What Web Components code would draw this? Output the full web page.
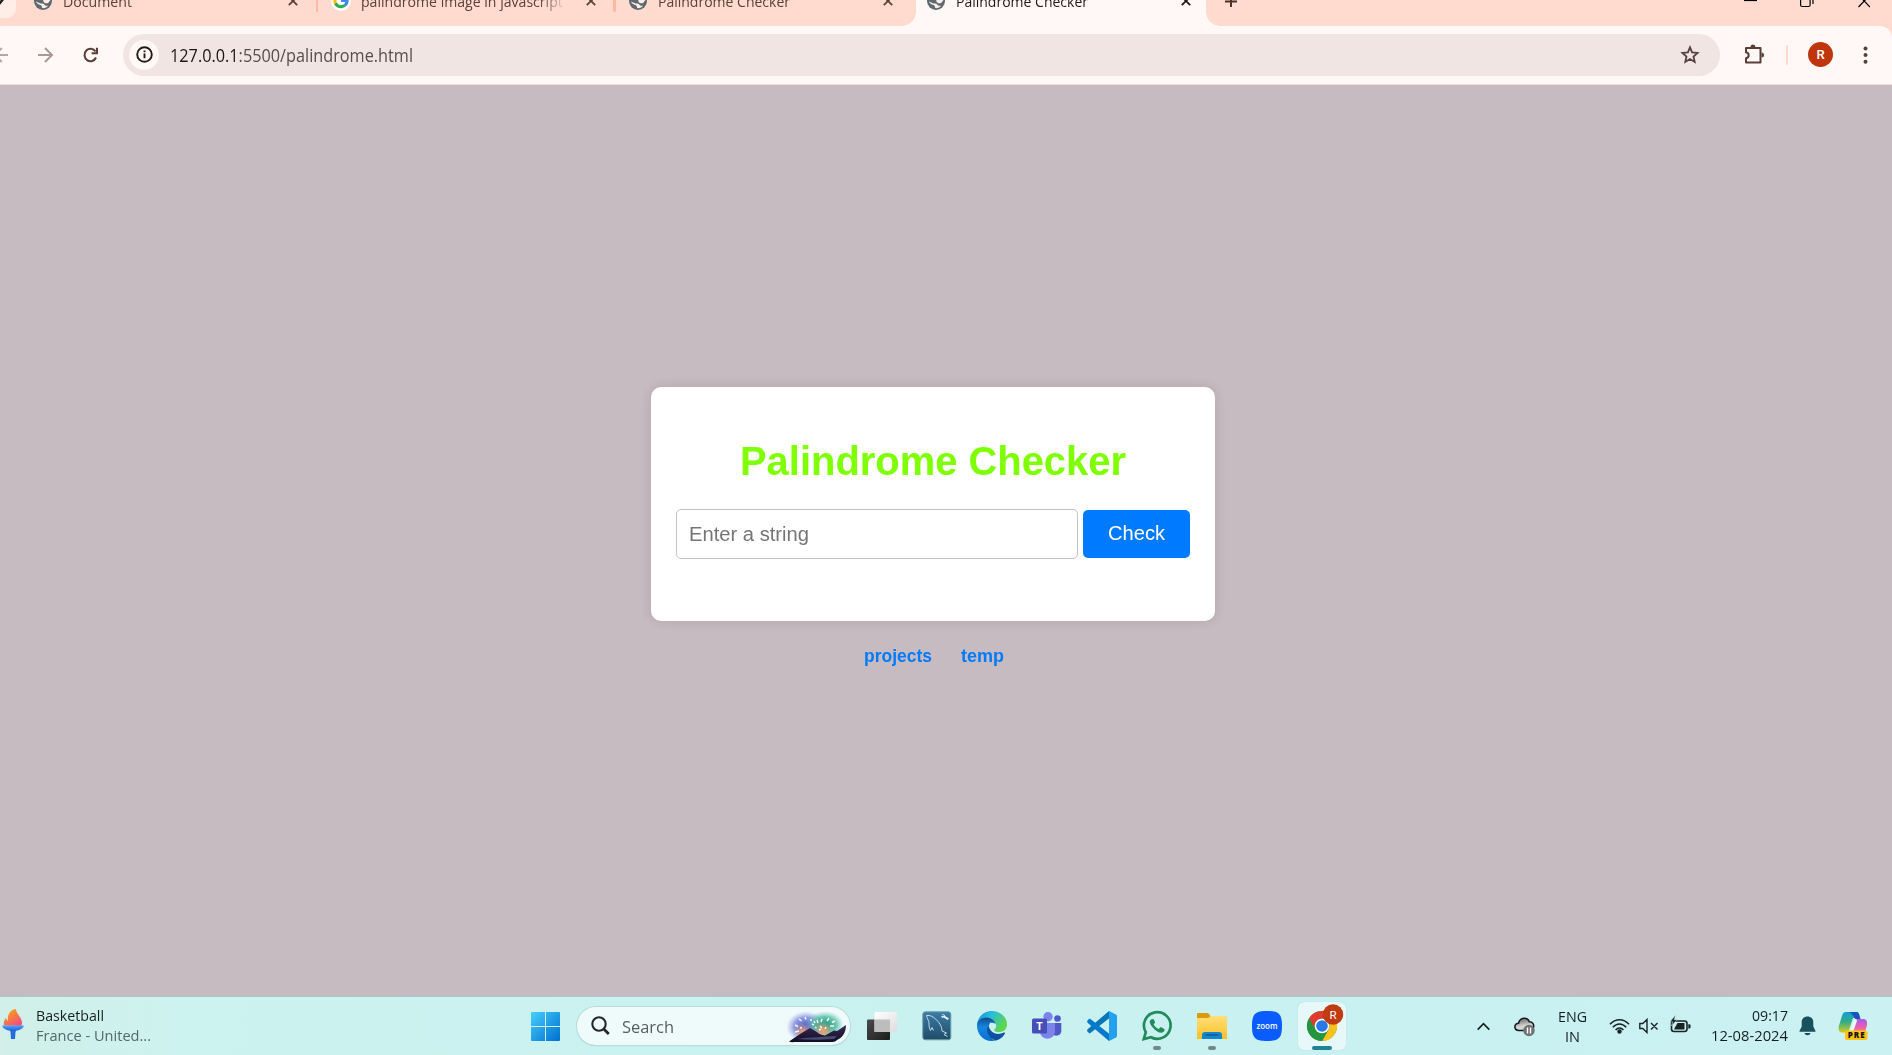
<!DOCTYPE html>
<html lang="en">
<head>
<meta charset="utf-8">
<title>Palindrome Checker</title>
<style>
html,body{margin:0;height:100%;overflow:hidden}
body{font-family:"Open Sans","Noto Sans",sans-serif;display:flex;flex-direction:column;background:#c6bbc0;color:#231a18}
</style>
</head>
<body>
<tab-strip></tab-strip>
<nav-bar></nav-bar>
<page-view></page-view>
<task-bar></task-bar>
<script>
function define(name, html) {
  const t = document.createElement('template');
  t.innerHTML = html;
  customElements.define(name, class extends HTMLElement {
    connectedCallback() {
      if (this.shadowRoot) return;
      this.attachShadow({mode: 'open'}).appendChild(document.importNode(t.content, true));
    }
  });
}

/* A single line of text stretched to an exact width. */
customElements.define('fit-text', class extends HTMLElement {
  connectedCallback() {
    if (this.shadowRoot) return;
    const w = +this.getAttribute('w');
    this.attachShadow({mode: 'open'}).innerHTML =
      `<style>:host{display:block;flex:none;width:${w}px;white-space:nowrap}span{display:inline-block;transform-origin:0 50%}</style><span><slot></slot></span>`;
    const s = this.shadowRoot.querySelector('span');
    const n = s.getBoundingClientRect().width;
    if (n) s.style.transform = `scaleX(${w / n})`;
  }
});

define('globe-icon', `<style>:host{display:block;flex:none;width:18px;height:18px}svg{display:block}</style>
<svg width="18" height="18" viewBox="0 0 18 18"><circle cx="9" cy="9" r="9" fill="#5f6a70"/><path d="M11 2c2.500.6 5 3 5.300 6.500-.6.300-1 .6-1.300 1.500-.5 1.300-3 1.700-4.500.7-1.200-.8-1.500-2-1-3.200z" fill="#ffeee8"/><path d="M2 9.600l4.500 1.900c2.200-.2 4 .4 4.600 2 1.200.7 2.800.3 3.300-.6-.8 1.900-3.300 3.600-6.200 3.200-.1-1.500-.5-2.600-1.700-3.200C4.500 12.500 2.500 11.500 2 9.600z" fill="#ffeee8"/></svg>`);

define('close-icon', `<style>:host{display:block;flex:none;width:10px;height:10px}svg{display:block}</style>
<svg width="10" height="10"><path d="M.8.8l8.400 8.400M9.200.8L.8 9.200" stroke="currentColor" stroke-width="1.800"/></svg>`);

define('browser-tab', `<style>
:host{display:flex;flex:none;align-items:center;width:297.500px;height:50px;box-sizing:border-box;padding-left:11px;font-size:15px;color:#5a413a}
.label{width:210px;margin-left:11px;overflow:hidden;line-height:20px}
:host([fade]) .label{-webkit-mask:linear-gradient(90deg,#000 178px,transparent 206px)}
close-icon{margin-left:15px}
:host([active]){color:#231a18}
</style><slot name="icon"></slot><div class="label"><slot></slot></div><close-icon></close-icon>`);

define('tab-strip', `<style>
:host{display:block;flex:none;height:26px;overflow:hidden;background:#ffdbcf}
.row{display:flex;height:50px;margin-top:-24px;position:relative}
.prev{width:16px;height:42px;background:#ffede8;border-radius:0 0 9px 0;margin-right:7px;overflow:hidden}
.prev svg{display:block;margin-top:19px}
browser-tab{position:relative}
.sep::after{content:"";position:absolute;right:2.500px;bottom:14px;width:2.500px;height:18px;border-radius:2px;background:#ffb8a2}
.active{background:#fff8f6;width:290px}
.active::before,.active::after{content:"";position:absolute;bottom:0;width:14px;height:14px}
.active::before{right:100%;background:radial-gradient(circle at 0 0,transparent 13.500px,#fff8f6 14px)}
.active::after{left:100%;background:radial-gradient(circle at 100% 0,transparent 13.500px,#fff8f6 14px)}
.g{display:block;flex:none;width:18px;height:18px}
.plus{margin:19px 0 0 19px;display:block}
.win{display:flex;margin-left:auto;padding:14px 22px 0 0}
.win svg{display:block}
</style><div class="row">
<div class="prev"><svg width="12" height="16"><path d="M-4 4L0 8l4-5" stroke="#231a18" stroke-width="2.500" fill="none"/></svg></div>
<browser-tab class="sep"><globe-icon slot="icon"></globe-icon><fit-text w="69">Document</fit-text></browser-tab>
<browser-tab class="sep" fade><svg slot="icon" class="g" viewBox="0 0 18 18" style="overflow:visible"><circle cx="9" cy="9" r="10" fill="#fff"/><path d="M9 7.400h7.500c.5 3.200-.7 5.500-2.400 6.900l-2.500-2c.9-.6 1.500-1.300 1.700-2.200H9z" fill="#4285f4"/><path d="M14.100 14.300C11.400 16.800 4.800 17.300 2.100 12.300l2.700-2c1.300 3.300 4.700 3.400 6.800 2z" fill="#34a853"/><path d="M2.100 12.300c-1-1.800-1.100-4.500 0-6.600l2.700 2c-.4.900-.4 1.800 0 2.600z" fill="#fbbc05"/><path d="M2.100 5.700C4.500 1 10.400.2 14 3.500l-2.300 2.300c-2.200-2-5.800-1.200-6.900 1.900z" fill="#ea4335"/></svg><fit-text w="210">palindrome image in javascript -</fit-text></browser-tab>
<browser-tab><globe-icon slot="icon"></globe-icon><fit-text w="132">Palindrome Checker</fit-text></browser-tab>
<browser-tab class="active" active><globe-icon slot="icon"></globe-icon><fit-text w="132">Palindrome Checker</fit-text></browser-tab>
<svg class="plus" width="12" height="12"><path d="M6 0v12M0 6.500h12" stroke="#4e3029" stroke-width="2"/></svg>
<div class="win"><svg width="126" height="18" fill="none" stroke="#000" stroke-width="1.200"><path d="M0 10.500h13"/><rect x="56.600" y="6.500" width="9.500" height="10" rx="1.500"/><path d="M58.500 3h8.500a2 2 0 0 1 2 2v9"/><path d="M114.500 5l11.500 12M126 5l-11.500 12"/></svg></div>
</div>`);

define('nav-bar', `<style>
:host{display:block;flex:none;height:59px;background:#ffdbcf;color:#5a3f38}
.bar{display:flex;align-items:center;box-sizing:border-box;height:58px;background:#fff8f6;border-radius:0 12px 0 0;padding-bottom:1px}
svg{display:block;flex:none}
.omni{display:flex;align-items:center;box-sizing:border-box;width:1597px;height:42px;border-radius:21px;background:#f1e5e4;margin:0 24px 0 25px;padding:0 20px 0 6px}
.info{width:30px;height:30px;border-radius:50%;background:#fff8f6;display:grid;place-items:center;margin-right:11px}
.url{font-size:18px;line-height:24px;color:#574d4d}
.url b{font-weight:400;color:#1c1615}
.star{margin-left:auto}
.sep{width:2px;height:20px;border-radius:1px;background:#ffdbcf;margin:0 20px 0 22px}
.av{width:25px;height:25px;border-radius:50%;background:#bf360c;color:#fff;font:500 13px/25px Roboto,sans-serif;text-align:center;margin-right:30px}
</style><div class="bar">
<svg width="38" height="18" fill="none" stroke="#b6a5a1" stroke-width="2"><path d="M-5 9H8M1.800 2l-7 7 7 7"/></svg>
<svg width="16" height="18" fill="none" stroke="#a99894" stroke-width="2"><path d="M0 9h14M7 2l7 7-7 7"/></svg>
<svg style="margin-left:29px" width="15" height="16" fill="none" stroke="#5a3f38" stroke-width="2.100"><path d="M13 10.500A6 6.200 0 1 1 12.500 4.500"/><path d="M14 .8v5.400H8.600"/></svg>
<div class="omni"><div class="info"><svg width="17" height="17" fill="none" stroke="#231a18" stroke-width="1.900"><circle cx="8.500" cy="8.500" r="7.300"/><path d="M8.500 7.600v4.700M8.500 4.400v1.900"/></svg></div>
<fit-text class="url" w="243"><b>127.0.0.1</b>:5500/palindrome.html</fit-text>
<svg class="star" width="20" height="20" viewBox="0 0 20 20" fill="none" stroke="#54413d" stroke-width="1.800"><path d="M10 2.300l2.100 5.100 5.500.5-4.100 3.600 1.200 5.400L10 14l-4.700 2.900 1.200-5.400-4.100-3.600 5.500-.5z"/></svg></div>
<svg width="20" height="21" viewBox="0 0 20 21"><path d="M2 4h14.500v14.500H2v-4.200c3.600-.7 3.600-5.400 0-6.100z" fill="none" stroke="#5a3f38" stroke-width="2" stroke-linejoin="round"/><path d="M6.500 3a2.500 2.500 0 0 1 5 0zM17.500 8.500a2.500 2.500 0 0 1 0 5z" fill="#5a3f38"/></svg>
<div class="sep"></div><div class="av">R</div>
<svg width="5" height="18" fill="#5a3f38"><circle cx="2.500" cy="2.500" r="2"/><circle cx="2.500" cy="9" r="2"/><circle cx="2.500" cy="15.700" r="2"/></svg>
</div>`);

define('checker-card', `<style>
:host{display:block;box-sizing:border-box;width:564px;height:234px;background:#fff;border-radius:10px;box-shadow:0 0 12px rgba(80,20,40,.13);padding:51px 25px 0}
h1{margin:0;font:bold 40px/46px "Liberation Sans",sans-serif;color:#7fff00;display:flex;justify-content:center}
.row{display:flex;align-items:center;margin-top:25px;gap:5px;font:20px/24px "Liberation Sans",sans-serif}
.in{box-sizing:border-box;width:402px;height:50px;border:1px solid #c4c4c4;border-radius:5px;padding:12px 0 0 12px;color:#757575}
.btn{width:107px;height:48px;border-radius:5px;background:#007bff;color:#fff;display:grid;place-items:center;box-sizing:border-box;padding-bottom:2px}
</style><h1><fit-text w="386">Palindrome Checker</fit-text></h1>
<div class="row"><div class="in"><fit-text w="120">Enter a string</fit-text></div><div class="btn"><fit-text w="57">Check</fit-text></div></div>`);

define('page-view', `<style>
:host{display:flex;flex:1;flex-direction:column;align-items:center;background:#c6bbc0;padding:302px 26px 0 0;font-family:"Liberation Sans",sans-serif}
nav{display:flex;gap:29px;margin-top:24px;padding-left:1px;font:bold 18px/22px "Liberation Sans",sans-serif;color:#007bff}
</style><checker-card></checker-card><nav><fit-text w="68">projects</fit-text><fit-text w="43">temp</fit-text></nav>`);

define('app-icon', `<style>
:host{display:grid;flex:none;place-items:center;position:relative;width:48px;height:48px;margin-right:7px;border-radius:6px;box-sizing:border-box}
:host([current]){background:#e6f8f8;box-shadow:0 0 1px #9fc6c6}
:host([running])::after{content:"";position:absolute;left:20px;bottom:0;width:8px;height:4px;border-radius:2px;background:#74898a}
:host([current])::after{content:"";position:absolute;left:14px;bottom:0;width:20px;height:4px;border-radius:2px;background:#1f8494}
::slotted(svg){display:block;width:30px;height:30px;overflow:visible}
</style><slot></slot>`);

define('search-box', `<style>
:host{display:flex;flex:none;align-items:center;box-sizing:border-box;width:273px;height:38px;border-radius:19px;background:#effbfb;box-shadow:0 0 0 1px #b9dcdc,0 1px 1px #8fbcbc;padding-left:14px;padding-right:3px;font-size:17px;color:#565f60}
fit-text{margin-left:12px;line-height:24px;padding-top:1px}
.art{margin-left:auto;margin-top:2px}
svg{display:block;flex:none}
</style><svg width="19" height="20" fill="none" stroke="#262626"><circle cx="8" cy="8" r="6.700" stroke-width="2.100"/><path d="M12.800 13l5 5" stroke-width="2.700"/></svg><fit-text w="52">Search</fit-text>
<svg class="art" width="60" height="32" viewBox="0 0 60 32"><defs><radialGradient id="a"><stop offset=".15" stop-color="#5a68cc"/><stop offset=".6" stop-color="#7783d8" stop-opacity=".8"/><stop offset="1" stop-color="#a3abee" stop-opacity="0"/></radialGradient><radialGradient id="b"><stop offset=".2" stop-color="#2fa38e"/><stop offset=".6" stop-color="#4db9a4" stop-opacity=".8"/><stop offset="1" stop-color="#6cd3bd" stop-opacity="0"/></radialGradient><radialGradient id="c"><stop offset="0" stop-color="#f0a070"/><stop offset="1" stop-color="#f0a070" stop-opacity="0"/></radialGradient><linearGradient id="d" x2="0" y2="1"><stop offset="0" stop-color="#3a2955"/><stop offset="1" stop-color="#120d26"/></linearGradient></defs>
<ellipse cx="19" cy="16" rx="20" ry="16" fill="url(#a)"/><ellipse cx="38" cy="14" rx="19" ry="14" fill="url(#b)"/><circle cx="36" cy="20" r="10" fill="url(#c)"/><circle cx="16" cy="21" r="9" fill="url(#c)"/>
<path d="M2 30.500L13 23 23 17c5 2 9 7 15 7.500l9-5 3 .5 9-6c0 8-4 13-9 15-2 2-4 2-7 2H9c-2 0-5 .5-7-.5z" fill="url(#d)"/><path d="M10 28c12-2 26-2 40-3l-3 3c-14 1-26 1-37 0z" fill="#64719b" opacity=".6"/>
<path d="M8 14l3 1.500M12 8l2.500 2M18 6l1 2.500M8 21l4-1M13 17l2-.5M24 8v2M25 13l2 1M30 9l1 3M35 8l-1 3M42 7l-2 3M48 10l-3 1.500M43 15h4M33 15l2 2M28 16l1.500 1M32 19l2-1M39 16l-1 2M27 10l1 2" stroke="#fdf6e0" stroke-width="1.500"/></svg>`);

define('weather-widget', `<style>
:host{display:flex;flex:none;width:160px;align-items:center;font-size:14.500px;line-height:20px;color:#16201f}
svg{display:block;flex:none;margin:-3px 12px 0 2px}.s{color:#53696a}.t{margin-top:-1px}
</style><svg width="22" height="31" viewBox="0 0 22 31"><defs><linearGradient id="f" x2=".6" y2="1"><stop offset="0" stop-color="#f2b319"/><stop offset=".55" stop-color="#fa7b3e"/><stop offset="1" stop-color="#f4517f"/></linearGradient><linearGradient id="h" x2="0" y2="1"><stop offset="0" stop-color="#4ba6f7"/><stop offset="1" stop-color="#245edc"/></linearGradient></defs><path d="M2 16.500C1 13 3 11 3.500 9c1 1 1.500 2.500 2.500 3C5 6 8 .5 14 0c-.5 4 6 8 6 14 0 2-.5 2.500-1 3z" fill="url(#f)"/><path d="M7 19h8l-1.500 4-.5 7H9l-.5-7z" fill="#246bdc"/><path d="M.3 16.500h21.400c.4 2.800-4 5.500-10.700 5.500S-.1 19.300.3 16.500z" fill="url(#h)"/></svg>
<div class="t"><fit-text w="68">Basketball</fit-text><fit-text class="s" w="115">France - United...</fit-text></div>`);

define('system-tray', `<style>
:host{display:flex;flex:none;align-items:center;margin-left:auto;padding-right:24px;font-size:15px;line-height:20px;color:#151f20}
svg{display:block;flex:none}
.l{display:flex;flex-direction:column;align-items:center;margin:0 22px 1px 23px}
.d{display:flex;flex-direction:column;align-items:flex-end;margin:0 11px 2px 20px}
</style>
<svg width="13" height="9" fill="none" stroke="#162122" stroke-width="1.700"><path d="M.7 7.700l5.800-6 5.800 6"/></svg>
<svg style="margin:1px 0 0 24px" width="21" height="20"><defs><linearGradient id="q" x2=".3" y2="1"><stop offset=".3" stop-color="#898989"/><stop offset=".7" stop-color="#d4d4d4"/></linearGradient></defs><path d="M4.700 13.500C-.5 13.500-.2 6.700 4.500 6.300 6 0 13.500-.3 15.300 4.800c3.600 0 4.800 3 4.200 5.500l-5 3.200z" fill="url(#q)" stroke="#161b1c" stroke-width="1.600"/><circle cx="15" cy="13.500" r="5.700" fill="#707171"/><path d="M13.500 10.500v6M16.500 10.500v6" stroke="#fff" stroke-width="1.400"/></svg>
<div class="l"><fit-text w="29">ENG</fit-text><fit-text w="15">IN</fit-text></div>
<svg style="margin-top:-1px" width="21" height="16" fill="none" stroke="#172425" stroke-width="1.500"><path d="M1 6.300c5.500-6.100 13.500-6.100 19 0M3.800 9.300c4-4.500 9.400-4.500 13.400 0M6.600 12c2.300-2.600 5.500-2.600 7.800 0"/><circle cx="10.500" cy="13.500" r="1.500" fill="#172425"/></svg>
<svg style="margin-left:9px" width="20" height="16" fill="none" stroke="#172425" stroke-width="1.400"><path d="M.8 5.500h3L8 1.500v13l-4.200-4h-3zM12 5l6.500 6.500M18.500 5L12 11.500"/></svg>
<svg style="margin:-4px 0 0 11px" width="21" height="18" viewBox="0 0 21 18"><rect x="1.500" y="6" width="15.500" height="10.500" rx="2.500" fill="none" stroke="#172425" stroke-width="1.600"/><path d="M18.300 9.200h1q1.200 0 1.200 1v2.200q0 1-1.200 1h-1z" fill="#172425"/><path d="M7.500 8H14.500v6.500H4l1.500-3z" fill="#172425"/><path d="M5.500 0L0 6.800h2.800L1.300 11 7.200 4.700H4.300z" fill="#172425" stroke="#cdf1f1" stroke-width=".5"/></svg>
<div class="d"><fit-text w="36">09:17</fit-text><fit-text w="77">12-08-2024</fit-text></div>
<svg width="17" height="20" fill="#18505b"><path d="M8.500.5c-3.600 0-5.800 2.300-5.800 5.700v4.300L.5 15v.8h16V15l-2.200-4.500V6.200C14.300 2.800 12.100.5 8.500.5zM5.500 17h6c-.5 3-5.500 3-6 0z"/></svg>
<svg style="margin-left:22px" width="30" height="30" viewBox="0 0 30 30"><defs><linearGradient id="m" x2="0" y2="1"><stop offset="0" stop-color="#139cd9"/><stop offset=".5" stop-color="#35ad83"/><stop offset="1" stop-color="#ddcb20"/></linearGradient><linearGradient id="n" x2="0" y2="1"><stop offset="0" stop-color="#a958ef"/><stop offset=".6" stop-color="#f060a6"/><stop offset="1" stop-color="#ff9956"/></linearGradient></defs><path d="M8 1h10c3 0 3 2 4 6h-7l-4 12c-.6 1.800-1.500 2.500-3 2.500H4C.5 21.500 0 18 1 14.500L4.300 4C5 2 6 1 8 1z" fill="url(#m)"/><path d="M11 1h7c3 0 3 2 4.500 7h-5c-2-1-2-5-6.500-7z" fill="#1755bb"/><path d="M17.500 8H25c3.500 0 4.500 2.500 4 6l-2.500 9H12l4-13q.4-2 1.500-2z" fill="url(#n)"/><path d="M17 8q2-.5 2 2l-4 11q-1 2-3 0l3.500-11q.5-2 1.500-2z" fill="#e9f7f6"/><rect x="7" y="19.500" width="22.500" height="9.500" rx="2" fill="#ffc414"/><text x="18.200" y="27.300" text-anchor="middle" font-family="Open Sans" font-weight="800" font-size="8" textLength="17" fill="#111">PRE</text></svg>`);

define('task-bar', `<style>
:host{display:flex;flex:none;height:59px;box-sizing:border-box;border-top:1px solid #a9c9c6;align-items:center;background:linear-gradient(90deg,#d1efe8 0,#cdf3f0 180px,#c8f1f0 900px,#cbf1f2 100%)}
search-box{margin-right:8px}.start{margin:0 17px 0 371px;display:block;flex:none}
</style><weather-widget></weather-widget>
<svg class="start" width="29" height="29"><defs><linearGradient id="w" gradientUnits="userSpaceOnUse" x2="29" y2="29"><stop offset="0" stop-color="#46d0fb"/><stop offset="1" stop-color="#006ecf"/></linearGradient></defs><path d="M1 0h13v14H0V1q0-1 1-1zM15 0h13q1 0 1 1v13H15zM0 15h14v14H1q-1 0-1-1zM15 15h14v13q0 1-1 1H15z" fill="url(#w)"/></svg>
<search-box></search-box>
<app-icon><svg viewBox="0 0 30 30"><defs><linearGradient id="t1" x2="1" y2="1"><stop stop-color="#4a4a4a"/><stop offset="1" stop-color="#1c1c1c"/></linearGradient><linearGradient id="t2" x2="1" y2="1"><stop stop-color="#fff"/><stop offset="1" stop-color="#ddd"/></linearGradient></defs><rect y="8.500" width="23" height="20.500" rx="1" fill="url(#t1)"/><rect x="7.500" y="1" width="22.500" height="20" rx="1" fill="url(#t2)"/><path d="M7.500 8.500H23V21H7.500z" fill="#bdbdbd"/></svg></app-icon>
<app-icon><svg viewBox="0 0 30 30"><defs><linearGradient id="y" x2="0" y2="1"><stop stop-color="#3b7ca7"/><stop offset="1" stop-color="#204c66"/></linearGradient></defs><rect x=".8" y=".8" width="28" height="28" rx="2.500" fill="url(#y)" stroke="#6b9dad"/><path d="M25.500 25.500l-3.500-2 2.500-1.500-4.500-2c0-5-3-9-6.500-12C11 5.500 8 4 4.500 4.500c.5 3 2 4.500 2.500 7 0 3 0 6 1.500 8l1.500-3 1.500 3" fill="none" stroke="#c5dae3" stroke-width="1"/><path d="M19.500 3.500c1.500-.8 3.500 0 3.500 1.500l4 2.500-1.300 1.500-4-2.500c-1.700.5-2.700-.5-2.200-1.700l1.500.5 1-1z" fill="#e8f4f6"/></svg></app-icon>
<app-icon><svg viewBox="0 0 30 30"><defs><linearGradient id="e1" x2="1" y2=".5"><stop stop-color="#1689d4"/><stop offset=".45" stop-color="#29bddd"/><stop offset="1" stop-color="#61d64c"/></linearGradient><linearGradient id="e2" x2="0" y2="1"><stop stop-color="#114a8b"/><stop offset=".4" stop-color="#1686dd"/><stop offset="1" stop-color="#0871d0"/></linearGradient></defs><path d="M0 15C0 6 7 0 15 0s15 6 15 13c0 6-4 8-8 8-4.500 0-5.500-1.500-4.200-3 3.500-4 0-8-5-8S1 12 0 15z" fill="url(#e1)"/><path d="M0 15C0 10 4 6.500 9.500 6.500c4.500 0 8.500 3 9 6.500-4-3-7-.5-7 4 0 6 4 12 6 12.700C7 31.500 0 23.500 0 15z" fill="url(#e2)"/><path d="M11.500 14.500c-5 9 5 14 6.500 15.200 4.500-.7 8.500-4 10-7.500.3-.8-.4-1-1-.6-6 3-13.500 1.400-15.500-7.100z" fill="#1151a1"/><path d="M12.800 11.700c3.700-.4 6.300 2.300 5 6.300-3.600 0-5.500-3-5-6.300z" fill="#c8f1f0"/></svg></app-icon>
<app-icon><svg viewBox="0 0 30 30"><circle cx="25.500" cy="7.500" r="3.300" fill="#5057c8"/><circle cx="16" cy="5.700" r="4.700" fill="#7b83eb"/><path d="M20 12h9.300v7.500c0 6-7 6.500-9.300 3z" fill="#5057c8"/><path d="M10 12h13v8c0 10-15 10.500-15 0z" fill="#7b83eb"/><rect y="7.500" width="15" height="15" rx="1.500" fill="#464eb8"/><text x="7.500" y="19" text-anchor="middle" font-family="Open Sans" font-size="11" font-weight="700" fill="#fff">T</text></svg></app-icon>
<app-icon><svg viewBox="0 0 30 30"><path d="M22 0L.8 18q-1.500 1.500 0 3l2 1.500L25 5z" fill="#0877b9"/><path d="M22 30L.8 12q-1.500-1.500 0-3l2-1.500L25 25z" fill="#007acc"/><path d="M22 0l7 3.500q1 .5 1 2v19q0 1.500-1 2L22 30z" fill="#23a0ee"/><path d="M22 8.500v13L14 15z" fill="#c8f1f0"/></svg></app-icon>
<app-icon running><svg viewBox="0 0 30 30" fill="none" stroke="#238b5b" stroke-width="2.700"><path d="M1.800 28l2-6.800a13.300 13.300 0 1 1 5.200 5z"/><path d="M9.500 8.200c-3 1.500-1.800 4.500 1 8 3.500 4.500 8 6.500 10.500 5 2-1.200 1.600-2.700 1.400-3.300L18.700 16l-2 2c-2-.5-4.500-3-5-4.700l1.500-1.700-1.600-3.500z" fill="#238b5b" stroke="none"/></svg></app-icon>
<app-icon running><svg viewBox="0 0 30 30"><defs><linearGradient id="fo" x2="0" y2="1"><stop stop-color="#ffdf77"/><stop offset="1" stop-color="#f9c128"/></linearGradient></defs><path d="M0 3q0-1 1-1h9q1.500 0 2.200 1.200L14 6v5H0z" fill="#dc9b0b"/><path d="M0 7h11l3-2h15q1 0 1 1v21q0 1-1 1H1q-1 0-1-1z" fill="url(#fo)"/><path d="M5 28v-4q0-3 3-3h14q3 0 3 3v4z" fill="#1685cf"/><path d="M8.500 24h13" stroke="#0b548c" stroke-width="1.300"/></svg></app-icon>
<app-icon><svg viewBox="0 0 30 30"><path d="M15 0c12 0 15 3 15 15s-3 15-15 15S0 27 0 15 3 0 15 0z" fill="#0b5cff"/><text x="15" y="17.500" text-anchor="middle" font-family="Open Sans" font-size="8.500" font-weight="600" textLength="21" lengthAdjust="spacingAndGlyphs" fill="#fff">zoom</text></svg></app-icon>
<app-icon current><svg viewBox="0 0 30 30"><circle cx="15" cy="15" r="15" fill="#34a853"/><path d="M2 7.500A15 15 0 0 1 28 7.500H15A7.500 7.500 0 0 0 8.500 18.800z" fill="#e13b30"/><path d="M28 7.500A15 15 0 0 1 15 30L21.500 18.800A7.500 7.500 0 0 0 15 7.500z" fill="#fcc21b"/><path d="M2 7.500A15 15 0 0 0 15 30l6.500-11.200h-13z" fill="#24943f"/><circle cx="15" cy="15" r="7.300" fill="#fff"/><circle cx="15" cy="15" r="5.800" fill="#2878e8"/><circle cx="26" cy="3.500" r="10.200" fill="#c03a12"/><text x="26" y="7.700" text-anchor="middle" font-family="Roboto" font-size="11.500" fill="#fff">R</text></svg></app-icon>
<system-tray></system-tray>`);
</script>
</body>
</html>
